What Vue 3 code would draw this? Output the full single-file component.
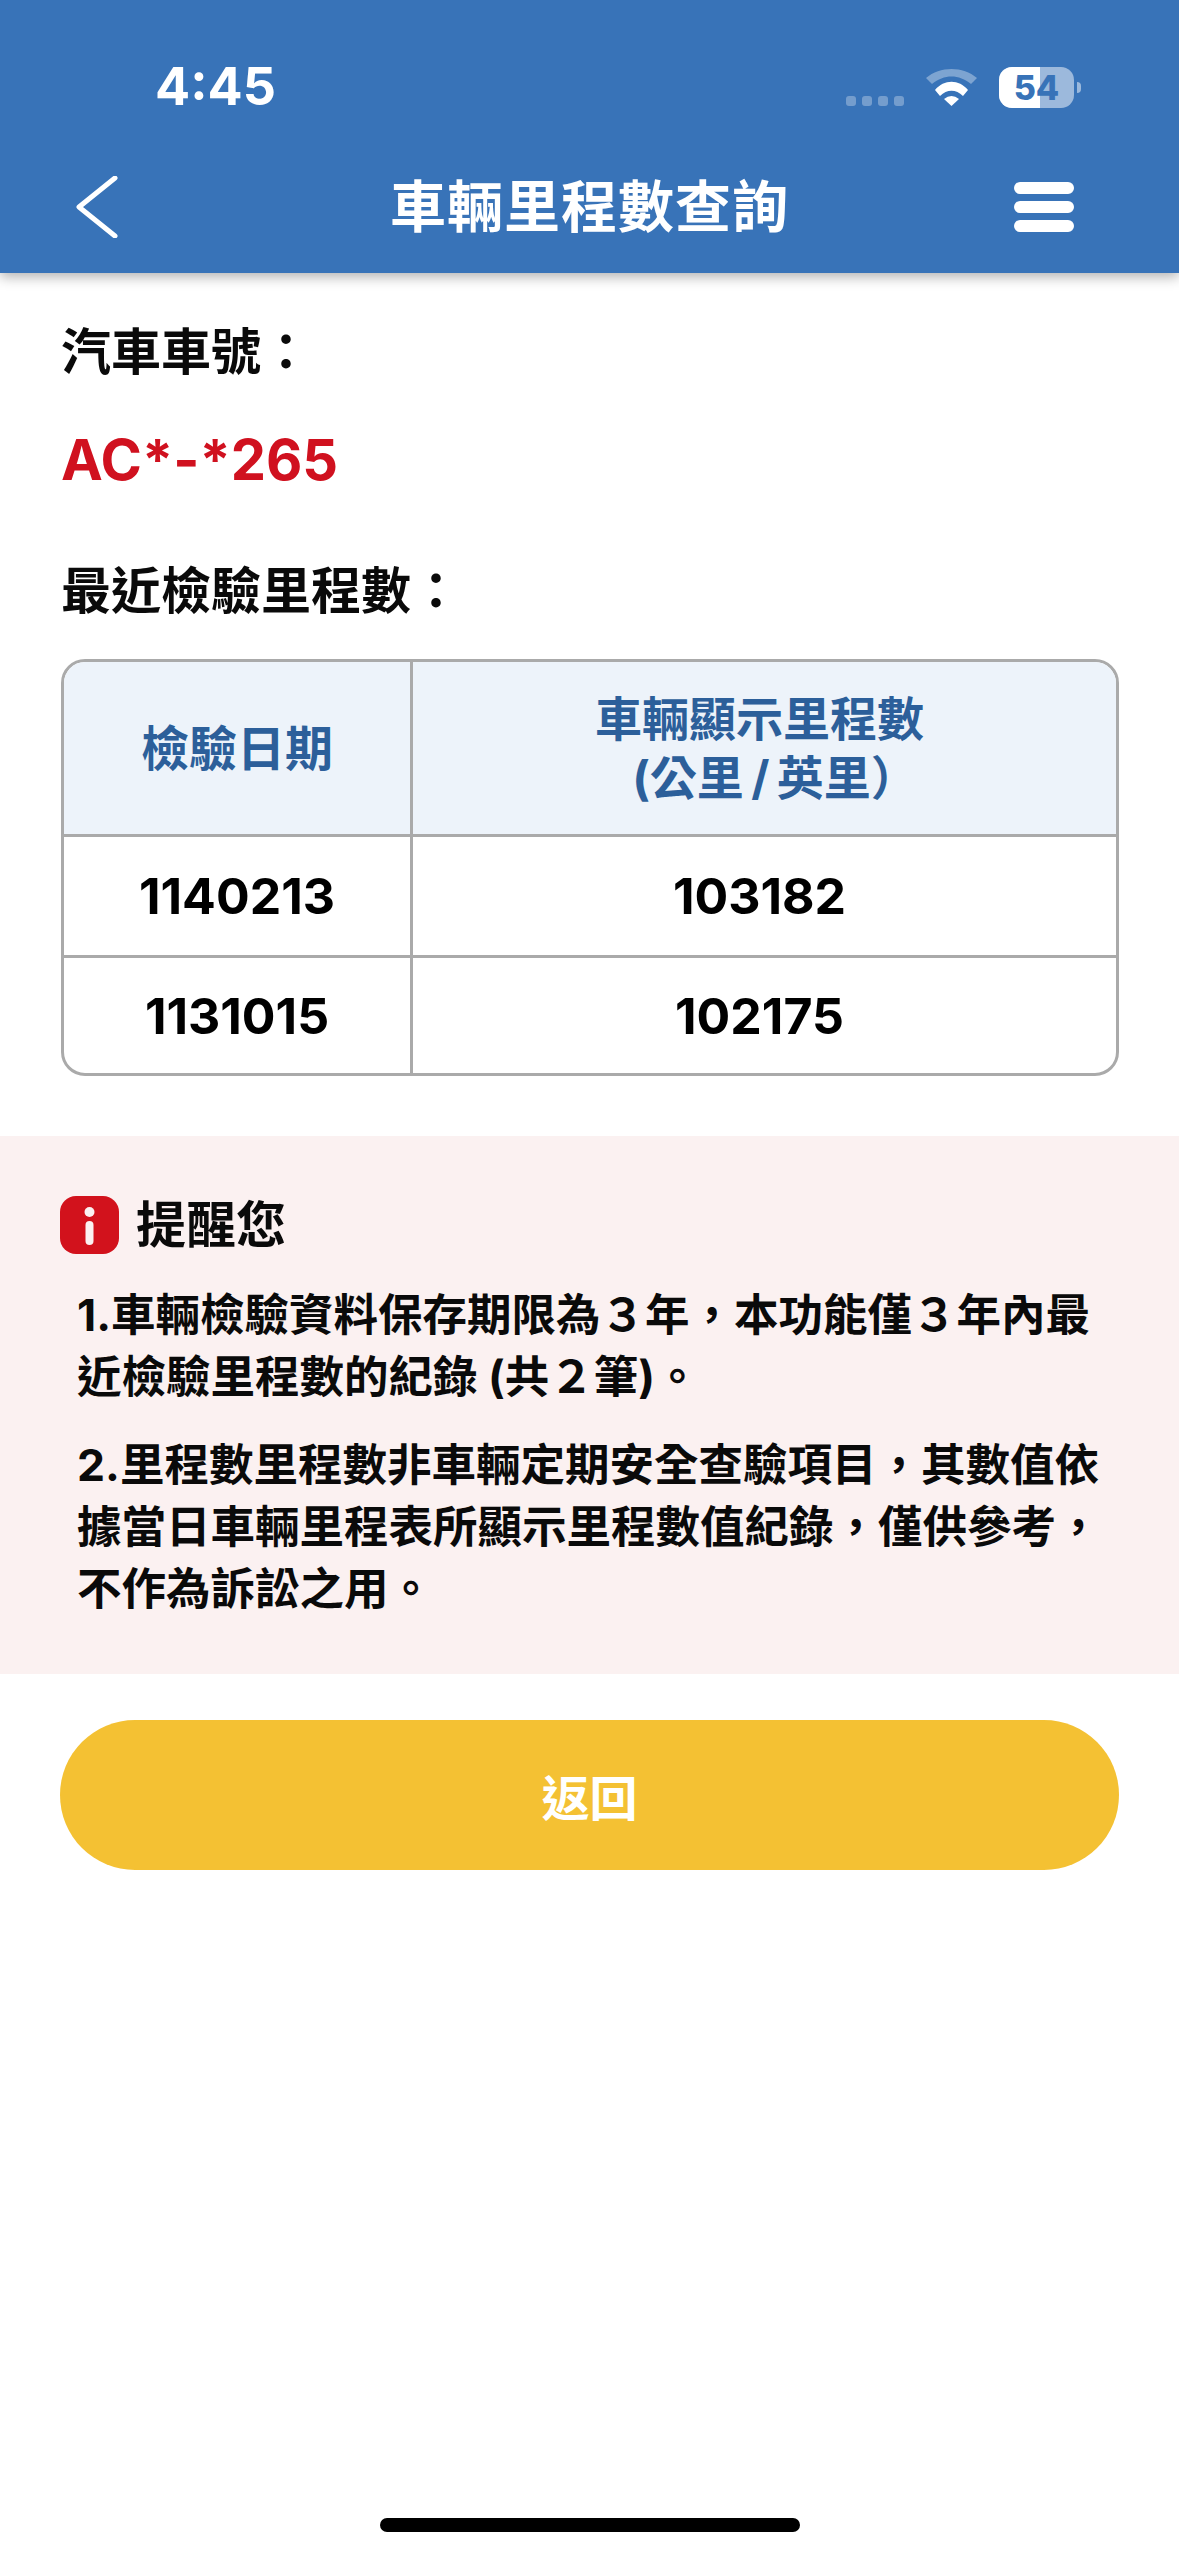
<script setup>
const rows = [
  { date: '1140213', km: '103182' },
  { date: '1131015', km: '102175' }
]
</script>

<template>
  <div class="page">
    <header class="header">
      <div class="status">
        <span class="time">4:45</span>
        <div class="status-right">
          <div class="dots"><i></i><i></i><i></i><i></i></div>
          <svg class="wifi" width="51" height="37" viewBox="0 0 51 37">
            <path d="M0 9C14-3 37-3 51 9L45 15C33 5 18 5 6 15Z" fill="#fff" opacity=".35" />
            <path d="M9 21C18 10 33 10 42 21L37 27C30 20 21 20 14 27Z" fill="#fff" />
            <path d="M18 30Q25.500 24 33 30L25.500 37Z" fill="#fff" />
          </svg>
          <div class="battery"><span class="level"></span><b>54</b></div>
          <span class="nub"></span>
        </div>
      </div>
      <nav class="nav">
        <svg class="back" width="42" height="62" viewBox="0 0 42 62">
          <path d="M39 2L3 31L39 60" fill="none" stroke="#fff" stroke-width="5" stroke-linecap="round" stroke-linejoin="round" />
        </svg>
        <h1 class="title">車輛里程數查詢</h1>
        <div class="menu"><i></i><i></i><i></i></div>
      </nav>
    </header>

    <main class="content">
      <p class="label">汽車車號：</p>
      <p class="plate">AC*-*265</p>
      <p class="label recent">最近檢驗里程數：</p>

      <div class="table">
        <div class="cell head">檢驗日期</div>
        <div class="cell head last">
          <div>車輛顯示里程數<span class="unit">(公里&#8201;/&#8201;英里）</span></div>
        </div>
        <template v-for="(row, i) in rows" :key="row.date">
          <div class="cell num" :class="{ second: i === 1 }">{{ row.date }}</div>
          <div class="cell num last" :class="{ second: i === 1 }">{{ row.km }}</div>
        </template>
      </div>
    </main>

    <section class="notice">
      <div class="notice-head">
        <svg width="59" height="58" viewBox="0 0 59 58">
          <rect width="59" height="58" rx="16" fill="#d2121c" />
          <circle cx="29.500" cy="16" r="5" fill="#fbf1f1" />
          <rect x="25.500" y="25" width="8" height="24" rx="4" fill="#fbf1f1" />
        </svg>
        <span>提醒您</span>
      </div>
      <p class="note">1.車輛檢驗資料保存期限為３年，本功能僅３年內最近檢驗里程數的紀錄 (共２筆)。</p>
      <p class="note">2.里程數里程數非車輛定期安全查驗項目，其數值依據當日車輛里程表所顯示里程數值紀錄，僅供參考，不作為訴訟之用。</p>
    </section>

    <div class="actions">
      <button class="btn">返回</button>
    </div>

    <div class="home"></div>
  </div>
</template>

<style scoped>
.page {
  width: 1179px;
  height: 2556px;
  position: relative;
  overflow: hidden;
  background: #fff;
  font-family: Inter, "Noto Sans CJK TC", sans-serif;
  color: #0a0a0a;
}
.header {
  height: 273px;
  background: #3873b8;
  box-shadow: 0 4px 12px rgba(0, 0, 0, 0.3);
  position: relative;
}
.status {
  height: 140px;
  display: flex;
  justify-content: space-between;
  padding: 0 98px 0 155px;
  box-sizing: border-box;
}
.time {
  margin-top: 58px;
  font-size: 52px;
  line-height: 58px;
  font-weight: 700;
  color: #fff;
}
.status-right {
  display: flex;
  align-items: flex-start;
  padding-top: 67px;
}
.dots {
  display: flex;
  gap: 6px;
  margin-top: 29px;
  margin-right: 22px;
}
.dots i {
  width: 10px;
  height: 10px;
  border-radius: 3px;
  background: rgba(255, 255, 255, 0.3);
}
.wifi {
  margin-top: 2px;
  margin-right: 22px;
}
.battery {
  width: 75px;
  height: 41px;
  border-radius: 13px;
  background: rgba(255, 255, 255, 0.5);
  position: relative;
  overflow: hidden;
  display: flex;
  align-items: center;
  justify-content: center;
}
.level {
  position: absolute;
  left: 0;
  top: 0;
  bottom: 0;
  width: 41px;
  background: #fff;
}
.battery b {
  position: relative;
  font-size: 34px;
  font-weight: 800;
  color: #3873b8;
}
.nub {
  width: 4px;
  height: 11px;
  margin: 15px 0 0 3px;
  border-radius: 0 4px 4px 0;
  background: rgba(255, 255, 255, 0.5);
}
.nav {
  height: 133px;
  display: grid;
  grid-template-columns: 1fr auto 1fr;
  align-items: center;
  padding: 0 105px;
  box-sizing: border-box;
}
.back {
  margin-left: -29px;
}
.title {
  margin: 0;
  font-size: 56px;
  line-height: 66px;
  font-weight: 700;
  letter-spacing: 1px;
  color: #fff;
}
.menu {
  justify-self: end;
  display: flex;
  flex-direction: column;
  gap: 7px;
  width: 60px;
}
.menu i {
  height: 12px;
  border-radius: 6px;
  background: #fff;
}
.content {
  padding: 0 60px 0 61px;
}
.label {
  margin: 51px 0 0;
  font-size: 50px;
  line-height: 56px;
  font-weight: 700;
}
.plate {
  margin: 45px 0 0;
  font-size: 56px;
  line-height: 70px;
  font-weight: 700;
  color: #d0111f;
}
.recent {
  margin-top: 68px;
}
.table {
  margin-top: 40px;
  display: grid;
  grid-template-columns: 349px 1fr;
  grid-template-rows: 175px 121px 115px;
  border: 3px solid #aaa;
  border-radius: 24px;
  overflow: hidden;
}
.cell {
  display: flex;
  align-items: center;
  justify-content: center;
  text-align: center;
  border-right: 3px solid #aaa;
  border-bottom: 3px solid #aaa;
}
.cell.last {
  border-right: 0;
  padding-right: 10px;
}
.cell.second {
  border-bottom: 0;
}
.head {
  background: #edf3fa;
  color: #2c5f9a;
  font-size: 48px;
  line-height: 59px;
  font-weight: 700;
}
.head.last {
  font-size: 47px;
}
.unit {
  display: block;
  padding-left: 31px;
}
.num {
  font-size: 50px;
  font-weight: 700;
  color: #000;
}
.notice {
  margin-top: 60px;
  height: 538px;
  box-sizing: border-box;
  background: #fbf1f1;
  padding: 60px 46px 0 60px;
}
.notice-head {
  display: flex;
  align-items: center;
  gap: 17px;
  font-size: 50px;
  line-height: 58px;
  font-weight: 700;
  margin-bottom: 30px;
}
.note {
  margin: 0 0 26px;
  padding: 0 0 0 17px;
  font-size: 44.500px;
  line-height: 62px;
  font-weight: 700;
}
.actions {
  padding: 46px 60px 0;
}
.btn {
  display: block;
  width: 100%;
  height: 150px;
  border: 0;
  border-radius: 75px;
  background: #f4c133;
  color: #fff;
  font-family: inherit;
  font-size: 48px;
  font-weight: 700;
}
.home {
  position: absolute;
  left: 380px;
  bottom: 24px;
  width: 420px;
  height: 14px;
  border-radius: 7px;
  background: #000;
}
</style>
